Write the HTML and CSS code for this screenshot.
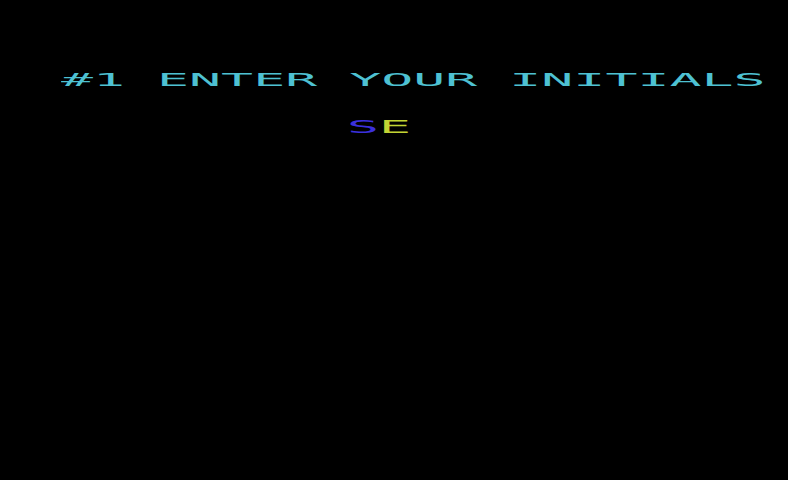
FILE: index.html
```html
<!DOCTYPE html>
<html lang="en">
<head>
<meta charset="utf-8">
<title>Enter Your Initials</title>
<link rel="stylesheet" href="styles.css">
</head>
<body>
<main class="screen">
  <h1 class="prompt">#1 ENTER YOUR INITIALS</h1>
  <div class="initials"><span class="initial-first">S</span><span class="initial-second">E</span></div>
</main>
</body>
</html>
```
FILE: styles.css
```css
html, body {
  margin: 0;
  padding: 0;
  background: #000;
}

.screen {
  width: 788px;
  height: 480px;
  box-sizing: border-box;
  padding-top: 71px;
  display: flex;
  flex-direction: column;
  align-items: flex-start;
  gap: 29px;
  overflow: hidden;
  font-family: "DejaVu Sans Mono", monospace;
  font-size: 18px;
  line-height: 18px;
}

/* blocky wide characters: narrow mono font stretched sideways */
.prompt,
.initials {
  margin: 0;
  font-size: inherit;
  font-weight: normal;
  white-space: pre;
  transform: scaleX(2.955);
  transform-origin: left top;
}

.prompt {
  margin-left: 61px;
  color: #4ec1d2;
}

.initials {
  margin-left: 347px;
}

.initial-first {
  color: #3b30dc;
}

.initial-second {
  color: #c2d434;
}
```
